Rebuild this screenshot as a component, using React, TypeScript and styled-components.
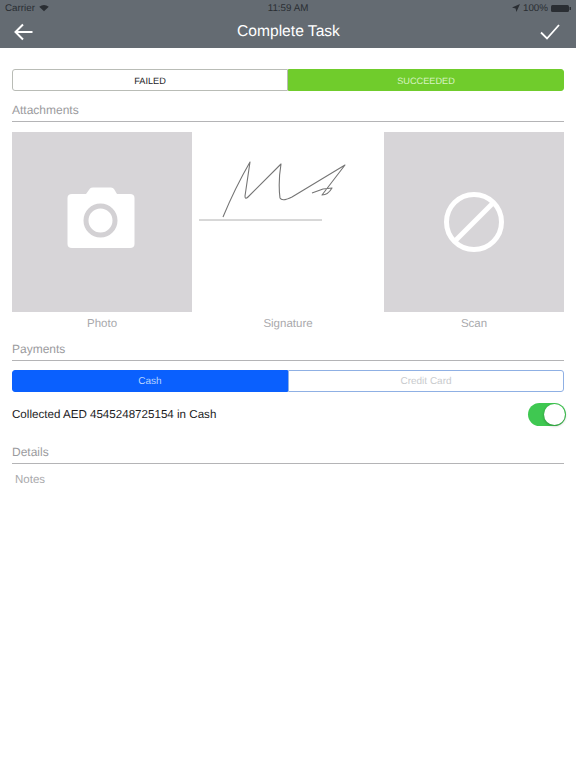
import { createGlobalStyle } from "styled-components";
import styled from "styled-components";

const GlobalStyle = createGlobalStyle`
  html, body {
    margin: 0;
    padding: 0;
    background: #fff;
    font-family: "Liberation Sans", Arial, sans-serif;
    text-rendering: geometricPrecision;
  }
`;

const Page = styled.div`
  width: 576px;
  height: 768px;
  overflow: hidden;
  background: #fff;
`;

const Header = styled.header`
  height: 48px;
  background: #646b72;
  color: #fff;
`;

const StatusBar = styled.div`
  height: 16px;
  display: grid;
  grid-template-columns: 1fr auto 1fr;
  align-items: center;
  padding: 0 5px 0 5px;
  font-size: 9.8px;
  color: #2a2e33;
`;

const StatusLeft = styled.div`
  display: flex;
  align-items: center;
  gap: 4px;
`;

const StatusRight = styled.div`
  display: flex;
  align-items: center;
  justify-content: flex-end;
  gap: 3px;
`;

const NavBar = styled.div`
  height: 32px;
  display: flex;
  align-items: center;
  justify-content: space-between;
  padding: 0 16px 0 14px;
`;

const Title = styled.h1`
  margin: 0 0 0 3px;
  font-size: 15.6px;
  font-weight: 400;
`;

const Content = styled.main`
  padding: 21px 12px 0;
`;

const Segmented = styled.div`
  display: grid;
  grid-template-columns: 1fr 1fr;
  height: 22px;
`;

const Segment = styled.div<{
  $bg: string;
  $border: string;
  $color: string;
  $side: "left" | "right";
  $size: number;
}>`
  display: flex;
  align-items: center;
  justify-content: center;
  padding-top: 1px;
  font-size: ${(p) => p.$size}px;
  color: ${(p) => p.$color};
  background: ${(p) => p.$bg};
  border: 1px solid ${(p) => p.$border};
  border-radius: ${(p) => (p.$side === "left" ? "3px 0 0 3px" : "0 3px 3px 0")};
`;

const SectionTitle = styled.div<{ $top: number }>`
  margin-top: ${(p) => p.$top}px;
  height: 21px;
  line-height: 21px;
  font-size: 12px;
  color: #9b9b9e;
  border-bottom: 1px solid #b4b4b6;
`;

const Attachments = styled.div`
  margin-top: 10px;
  display: grid;
  grid-template-columns: repeat(3, 180px);
  justify-content: space-between;
`;

const Attachment = styled.figure`
  margin: 0;
  display: flex;
  flex-direction: column;
  align-items: center;
`;

const Thumb = styled.div<{ $empty?: boolean }>`
  width: 180px;
  height: 180px;
  display: flex;
  align-items: center;
  justify-content: center;
  background: ${(p) => (p.$empty ? "#fff" : "#d7d5d8")};
`;

const CameraIcon = styled.svg`
  margin: 0 2px 8px 0;
`;

const Caption = styled.figcaption`
  margin-top: 5px;
  height: 13px;
  line-height: 14px;
  font-size: 11.5px;
  color: #a9a9ac;
`;

const PaymentSegmented = styled(Segmented)`
  margin-top: 9px;
`;

const CollectedRow = styled.div`
  height: 44px;
  display: flex;
  align-items: center;
  justify-content: space-between;
  margin-right: -2px;
  font-size: 11.6px;
  color: #1c1c1e;
`;

const CollectedText = styled.span`
  padding-top: 1px;
`;

const Toggle = styled.div`
  width: 38px;
  height: 23px;
  border-radius: 12px;
  background: #3fc851;
  display: flex;
  justify-content: flex-end;
  align-items: center;
  padding-right: 1px;
  box-sizing: border-box;
`;

const Knob = styled.div`
  width: 21px;
  height: 21px;
  border-radius: 50%;
  background: #fff;
  box-shadow: 0 1px 3px rgba(0, 0, 0, 0.3);
`;

const Notes = styled.div`
  margin: 9px 0 0 3px;
  font-size: 11.5px;
  line-height: 14px;
  color: #a9a9ac;
`;

function App() {
  return (
    <Page>
      <GlobalStyle />
      <Header>
        <StatusBar>
          <StatusLeft>
            Carrier
            <svg width="10" height="8" viewBox="0 0 12 9">
              <path d="M6 8.5 0.3 3Q6 -1.4 11.7 3Z" fill="#2a2e33" />
            </svg>
          </StatusLeft>
          <span>11:59 AM</span>
          <StatusRight>
            <svg width="8" height="8" viewBox="0 0 8 8">
              <path d="M8 0 0 3.6 3.6 4.4 4.4 8Z" fill="#2a2e33" />
            </svg>
            100%
            <svg width="20" height="9" viewBox="0 0 20 9">
              <rect x="0" y="1" width="18" height="7" rx="1.5" fill="#2a2e33" />
              <rect x="18.5" y="3" width="1.5" height="3" fill="#2a2e33" />
            </svg>
          </StatusRight>
        </StatusBar>
        <NavBar>
          <svg width="20" height="18" viewBox="0 0 20 18" fill="none" stroke="#fff" strokeWidth="2">
            <path d="M18.5 9H1.5M9 1.5 1.5 9 9 16.5" />
          </svg>
          <Title>Complete Task</Title>
          <svg width="20" height="16" viewBox="0 0 20 16" fill="none" stroke="#fff" strokeWidth="1.8">
            <path d="M1 8.5 7 14.5 19 1" />
          </svg>
        </NavBar>
      </Header>
      <Content>
        <Segmented>
          <Segment $side="left" $size={9.2} $bg="#fff" $border="#b9bcb6" $color="#26262a">
            FAILED
          </Segment>
          <Segment $side="right" $size={9.2} $bg="#70cc2c" $border="#70cc2c" $color="#d9f3c4">
            SUCCEEDED
          </Segment>
        </Segmented>

        <SectionTitle $top={9}>Attachments</SectionTitle>
        <Attachments>
          <Attachment>
            <Thumb>
              <CameraIcon width="68" height="62" viewBox="0 0 68 62">
                <path
                  d="M5 7H19L23 1.5Q24 0.5 26 0.5H44Q46 0.5 47 2L50 7H63Q67.5 7 67.5 11V57Q67.5 61 63 61H5Q0.5 61 0.5 57V11Q0.5 7 5 7Z"
                  fill="#fff"
                />
                <circle cx="33.5" cy="33.5" r="14.5" fill="none" stroke="#d3d1d4" strokeWidth="5" />
              </CameraIcon>
            </Thumb>
            <Caption>Photo</Caption>
          </Attachment>
          <Attachment>
            <Thumb $empty>
              <svg width="180" height="180" viewBox="6 0 180 180" fill="none">
                <path d="M7 88H130" stroke="#b0b0b0" strokeWidth="1" />
                <path
                  d="M31 85 Q43 56 58 30 Q55 50 53 64 Q53 68 56 65 L89 32 Q86 50 88 66 Q90 70 100 65 L153 33 L130 63 Q136 63 140 56 L131 57 L120 61"
                  stroke="#757575"
                  strokeWidth="1.1"
                  strokeLinejoin="round"
                />
              </svg>
            </Thumb>
            <Caption>Signature</Caption>
          </Attachment>
          <Attachment>
            <Thumb>
              <svg width="62" height="62" viewBox="0 0 62 62" fill="none" stroke="#fff" strokeWidth="5">
                <circle cx="31" cy="31" r="27.5" />
                <path d="M12 50 50 12" />
              </svg>
            </Thumb>
            <Caption>Scan</Caption>
          </Attachment>
        </Attachments>

        <SectionTitle $top={9}>Payments</SectionTitle>
        <PaymentSegmented>
          <Segment $side="left" $size={10} $bg="#0a60fe" $border="#0a60fe" $color="#b9d4ff">
            Cash
          </Segment>
          <Segment $side="right" $size={10} $bg="#fff" $border="#8fb0e4" $color="#c9cbce">
            Credit Card
          </Segment>
        </PaymentSegmented>
        <CollectedRow>
          <CollectedText>Collected AED 4545248725154 in Cash</CollectedText>
          <Toggle>
            <Knob />
          </Toggle>
        </CollectedRow>

        <SectionTitle $top={6}>Details</SectionTitle>
        <Notes>Notes</Notes>
      </Content>
    </Page>
  );
}

export default App;
